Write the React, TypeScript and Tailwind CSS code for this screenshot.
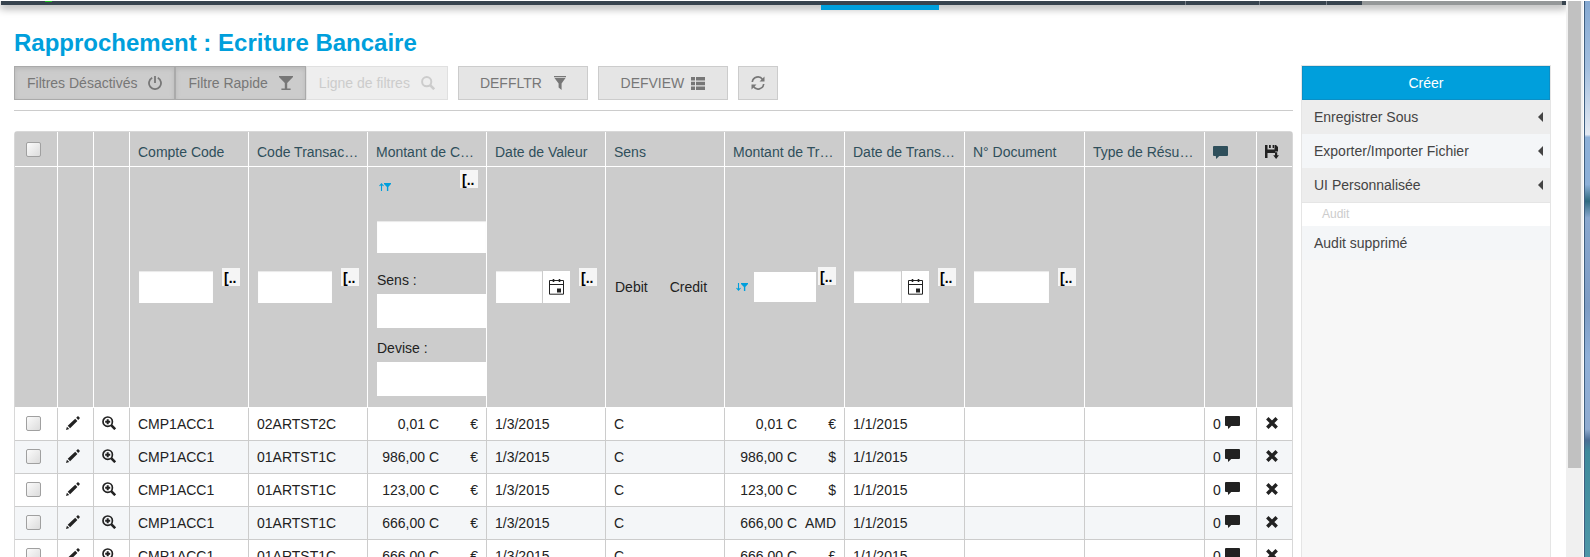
import type { ReactNode } from "react";

const rows = [
  { code: "02ARTST2C", amount: "0,01 C", transCurrency: "€" },
  { code: "01ARTST1C", amount: "986,00 C", transCurrency: "$" },
  { code: "01ARTST1C", amount: "123,00 C", transCurrency: "$" },
  { code: "01ARTST1C", amount: "666,00 C", transCurrency: "AMD" },
  { code: "01ARTST1C", amount: "666,00 C", transCurrency: "£" },
];

const headCell =
  "h-[35px] border-r border-b border-white bg-[#ccc] px-2 pt-[6px] text-left align-middle font-normal text-[#2f4f5b]";
const filterCell = "h-[241px] overflow-hidden border-r border-b border-white bg-[#ccc] pl-[9px] align-middle";
const bodyCell = "h-[33px] border-r border-b border-[#ccc] px-2 align-middle";
const iconCell = "h-[33px] border-r border-b border-[#ccc] px-2 pb-[2px] align-middle";
const inputBox = "block bg-white px-1 shadow-[inset_0_1px_1px_#e8e8e8] outline-none";
const checkBox =
  "block size-[15px] appearance-none rounded-[2px] border border-[#a0a0a0] bg-linear-to-br from-[#fbfbfb] to-[#dcdcdc]";

function PowerIcon() {
  return (
    <svg className="size-[14px] shrink-0" viewBox="0 0 14 14" fill="none" stroke="currentColor" strokeWidth="1.8">
      <path d="M4.2 1.8a6 6 0 1 0 5.6 0" />
      <path d="M7 0v7" />
    </svg>
  );
}

function GlassIcon() {
  return (
    <svg className="size-[14px] shrink-0" viewBox="0 0 14 14" fill="currentColor">
      <path d="M0 0h14v1L8.200 7v5.400h3.400V14H2.400v-1.600h3.400V7L0 1z" />
    </svg>
  );
}

function SearchIcon() {
  return (
    <svg className="size-[14px] shrink-0" viewBox="0 0 14 14" fill="none" stroke="currentColor">
      <circle cx="5.700" cy="5.700" r="4.600" strokeWidth="2" />
      <path d="M9 9l4.200 4.200" strokeWidth="2.600" />
    </svg>
  );
}

function FunnelIcon() {
  return (
    <svg className="h-[14px] w-3 shrink-0" viewBox="0 0 12 14" fill="currentColor">
      <path d="M0 0h12v1.200H0zM.5 2h11L7.600 7.500V14L4.600 11.500v-4z" />
    </svg>
  );
}

function ListIcon() {
  return (
    <svg className="h-[13px] w-[14px] shrink-0" viewBox="0 0 14 13" fill="currentColor">
      <path d="M0 0h4v3.600H0zM5 0h9v3.600H5zM0 4.700h4v3.600H0zM5 4.700h9v3.600H5zM0 9.400h4V13H0zM5 9.400h9V13H5z" />
    </svg>
  );
}

function RefreshIcon() {
  return (
    <svg className="size-[14px]" viewBox="0 0 14 14" fill="none" stroke="currentColor" strokeWidth="1.700">
      <path d="M1.300 6A5.700 5.700 0 0 1 11.600 3.400M12.700 8A5.700 5.700 0 0 1 2.400 10.600" />
      <path d="M13.500.5v5H8.500zM.5 13.500v-5h5z" fill="currentColor" stroke="none" />
    </svg>
  );
}

function CommentIcon() {
  return (
    <svg className="h-[13px] w-[15px] shrink-0" viewBox="0 0 15 13" fill="currentColor">
      <path d="M1 0h13q1 0 1 1v8q0 1-1 1H6.200L3.200 13l-.4-3H1Q0 10 0 9V1Q0 0 1 0z" />
    </svg>
  );
}

function SaveIcon() {
  return (
    <svg className="block size-[14px]" viewBox="0 0 14 14" fill="currentColor">
      <path d="M0 0h2.500v4.500h7V0H11l2 2v4.500h-2.800V8H2.500v5H0zM4 0h1.800v3H4zM7.600 0H9v3H7.600z" />
      <path d="M10 7.300h2.200v3H14L11.100 14l-2.900-3.700H10z" />
    </svg>
  );
}

function PencilIcon() {
  return (
    <svg className="block size-[14px]" viewBox="0 0 14 14" fill="currentColor">
      <path d="M0 14l.9-3.300L3.300 13.100zM1.700 9.800L9.200 2.700l2.200 2.200-7.300 7.300zM10.200 1.800L12 0l2 2-1.800 1.900z" />
    </svg>
  );
}

function ZoomIcon() {
  return (
    <svg className="block size-[14px]" viewBox="0 0 14 14" fill="none" stroke="currentColor">
      <circle cx="5.700" cy="5.700" r="4.700" strokeWidth="1.700" />
      <path d="M9.200 9.200l4 4" strokeWidth="2.600" />
      <path d="M5.700 3.200v5M3.200 5.700h5" strokeWidth="2" />
    </svg>
  );
}

function CrossIcon() {
  return (
    <svg className="block size-3" viewBox="0 0 12 12" stroke="currentColor" strokeWidth="3.400">
      <path d="M1.300 1.300l9.400 9.400M10.700 1.300l-9.400 9.400" />
    </svg>
  );
}

function CalendarIcon() {
  return (
    <svg className="h-4 w-[15px]" viewBox="0 0 15 16" fill="none" stroke="#222">
      <path d="M.5 1.500h14v13.700H.5zM.5 5.500h14" strokeWidth="1" />
      <path d="M4.500 0v3M10.500 0v3" strokeWidth="1.600" />
      <path d="M8 9.500h4v4H8z" fill="#222" stroke="none" />
    </svg>
  );
}

function SortIcon({ up }: { up?: boolean }) {
  return (
    <svg className="h-2 w-3 shrink-0" viewBox="0 0 12 8">
      <path
        d={up ? "M2.500 8V1M.5 3L2.500.8 4.500 3" : "M2.500 0v7M.5 5L2.500 7.200 4.500 5"}
        fill="none"
        stroke="#009fdc"
        strokeWidth="1.100"
      />
      <path d="M5 0h7v1L9.300 4v4H7.900V4L5 1z" fill="#009fdc" />
    </svg>
  );
}

function More() {
  return (
    <button
      type="button"
      className="block size-[18px] shrink-0 self-start overflow-hidden bg-[#f5f5f5] pl-[2px] text-left text-sm leading-5 font-bold text-black"
    >
      [..
    </button>
  );
}

function TextFilter({ label }: { label: string }) {
  return (
    <div className="flex h-[38px] items-center gap-[9px] pr-2">
      <input aria-label={label} className={`${inputBox} h-8 w-0 flex-1`} />
      <More />
    </div>
  );
}

function DateFilter({ label }: { label: string }) {
  return (
    <div className="flex h-[38px] items-center gap-[9px] pr-2">
      <div className="flex flex-1 gap-px">
        <input aria-label={label} className={`${inputBox} h-8 w-0 flex-1`} />
        <button type="button" aria-label="Calendrier" className="flex h-8 w-[27px] items-center justify-center bg-white">
          <CalendarIcon />
        </button>
      </div>
      <More />
    </div>
  );
}

function Amount({ value, currency }: { value: string; currency: string }) {
  return (
    <div className="flex justify-end">
      <span>{value}</span>
      <span className="w-[39px] text-right">{currency}</span>
    </div>
  );
}

function MenuItem({ children, tone, arrow }: { children: ReactNode; tone: string; arrow?: boolean }) {
  return (
    <a href="#" className={`flex h-[34px] items-center justify-between pr-[7px] pl-3 text-[#444] ${tone}`}>
      {children}
      {arrow && (
        <svg className="h-[10px] w-[5px]" viewBox="0 0 5 10" fill="#444">
          <path d="M5 0v10L0 5z" />
        </svg>
      )}
    </a>
  );
}

export default function App() {
  const pressed =
    "flex h-[34px] items-center gap-[11px] border border-[#aaa] bg-[#ccc] px-3 shadow-[inset_0_2px_4px_#b8b8b8]";
  const plain = "flex h-[34px] items-center justify-center border border-[#ccc] bg-[#e5e5e5]";
  return (
    <div className="flex h-screen overflow-hidden bg-white pt-px font-['Liberation_Sans',Arial,sans-serif] text-sm leading-5 text-[#222]">
      <div className="min-w-0 flex-1 overflow-hidden pl-px">
        <header className="relative flex h-1 justify-end bg-[#38444f] pr-1 shadow-[0_2px_9px_1px_rgba(0,0,0,0.4)]">
          <div className="absolute top-0 left-[44px] h-px w-[7px] bg-[#1fc41f]" />
          <div className="absolute top-full left-[820px] h-[5px] w-[118px] bg-[#009fdc]" />
          <div className="w-[74px] border-l border-[#777f87]" />
          <div className="w-[67px] border-l border-[#777f87]" />
          <div className="w-[36px] border-l border-[#777f87]" />
          <div className="w-[200px] bg-[#959899]" />
        </header>

        <main className="pr-[15px] pl-[13px]">
          <h1 className="pt-[22px] text-2xl leading-8 font-bold text-[#009fdc]">Rapprochement : Ecriture Bancaire</h1>
          <div className="flex items-start gap-2 pt-[6px]">
            <section className="min-w-0 flex-1">
              <div className="flex gap-[10px] border-b border-[#ccc] pt-px pb-[10px] text-[#777]">
                <div className="flex">
                  <button type="button" className={pressed}>
                    Filtres Désactivés <PowerIcon />
                  </button>
                  <button type="button" className={pressed}>
                    Filtre Rapide <GlassIcon />
                  </button>
                  <button
                    type="button"
                    disabled
                    className="flex h-[34px] items-center gap-[11px] border border-[#e0e0e0] bg-[#eee] px-3 text-[#ccc]"
                  >
                    Ligne de filtres <SearchIcon />
                  </button>
                </div>
                <button type="button" className={`${plain} w-[130px] gap-3`}>
                  DEFFLTR <FunnelIcon />
                </button>
                <button type="button" className={`${plain} w-[130px] gap-[7px]`}>
                  DEFVIEW <ListIcon />
                </button>
                <button type="button" aria-label="Actualiser" className={`${plain} w-10`}>
                  <RefreshIcon />
                </button>
              </div>

              <table className="mt-5 w-full table-fixed border-separate border-spacing-0 rounded-t-[3px] border border-[#d8d8d8]">
                <colgroup>
                  <col className="w-[43px]" />
                  <col className="w-9" />
                  <col className="w-9" />
                  <col span={5} className="w-[119px]" />
                  <col span={4} />
                  <col className="w-[52px]" />
                  <col className="w-[35px]" />
                </colgroup>
                <thead>
                  <tr>
                    <th className="h-[35px] border-r border-b border-white bg-[#ccc] pl-[11px] align-middle">
                      <input type="checkbox" aria-label="Tout sélectionner" className={checkBox} />
                    </th>
                    <th className={headCell} />
                    <th className={headCell} />
                    <th className={headCell}>Compte Code</th>
                    <th className={headCell}>Code Transac…</th>
                    <th className={headCell}>Montant de C…</th>
                    <th className={headCell}>Date de Valeur</th>
                    <th className={headCell}>Sens</th>
                    <th className={headCell}>Montant de Tr…</th>
                    <th className={headCell}>Date de Trans…</th>
                    <th className={headCell}>N° Document</th>
                    <th className={headCell}>Type de Résu…</th>
                    <th className={headCell}>
                      <CommentIcon />
                    </th>
                    <th className="h-[35px] border-b border-white bg-[#ccc] px-2 pt-[6px] align-middle text-[#222]">
                      <SaveIcon />
                    </th>
                  </tr>
                  <tr>
                    <td className={filterCell} />
                    <td className={filterCell} />
                    <td className={filterCell} />
                    <td className={filterCell}>
                      <TextFilter label="Compte Code" />
                    </td>
                    <td className={filterCell}>
                      <TextFilter label="Code Transaction" />
                    </td>
                    <td className={filterCell}>
                      <div className="flex flex-col pb-[11px]">
                        <div className="flex h-[54px] justify-between pt-[3px] pr-2 pl-[2px]">
                          <div className="pt-[13px]">
                            <SortIcon up />
                          </div>
                          <More />
                        </div>
                        <input aria-label="Montant" className={`${inputBox} h-8 w-full`} />
                        <label htmlFor="f-sens" className="pt-[17px] pb-1">
                          Sens :
                        </label>
                        <input id="f-sens" className="block h-[34px] w-full bg-white px-1 outline-none" />
                        <label htmlFor="f-devise" className="pt-[10px] pb-1">
                          Devise :
                        </label>
                        <input id="f-devise" className="block h-[34px] w-full bg-white px-1 outline-none" />
                      </div>
                    </td>
                    <td className={filterCell}>
                      <DateFilter label="Date de Valeur" />
                    </td>
                    <td className={filterCell}>
                      <div className="flex gap-[22px]">
                        <span>Debit</span>
                        <span>Credit</span>
                      </div>
                    </td>
                    <td className={filterCell}>
                      <div className="flex h-10 items-center gap-[2px] pr-2 pl-[2px]">
                        <SortIcon />
                        <input
                          aria-label="Montant de Transaction"
                          className="ml-1 block h-[30px] w-0 flex-1 bg-white px-1 outline-none"
                        />
                        <More />
                      </div>
                    </td>
                    <td className={filterCell}>
                      <DateFilter label="Date de Transaction" />
                    </td>
                    <td className={filterCell}>
                      <TextFilter label="N° Document" />
                    </td>
                    <td className={filterCell} />
                    <td className={filterCell} />
                    <td className="h-[241px] border-b border-white bg-[#ccc]" />
                  </tr>
                </thead>
                <tbody>
                  {rows.map((row, i) => (
                    <tr key={i} className="even:bg-[#f4f6f8]">
                      <td className="h-[33px] border-r border-b border-[#ccc] pb-[2px] pl-[11px] align-middle">
                        <input type="checkbox" aria-label={`Ligne ${i + 1}`} className={checkBox} />
                      </td>
                      <td className={iconCell}>
                        <button type="button" aria-label="Modifier" className="block">
                          <PencilIcon />
                        </button>
                      </td>
                      <td className={iconCell}>
                        <button type="button" aria-label="Détails" className="block">
                          <ZoomIcon />
                        </button>
                      </td>
                      <td className={bodyCell}>CMP1ACC1</td>
                      <td className={bodyCell}>{row.code}</td>
                      <td className={bodyCell}>
                        <Amount value={row.amount} currency="€" />
                      </td>
                      <td className={bodyCell}>1/3/2015</td>
                      <td className={bodyCell}>C</td>
                      <td className={bodyCell}>
                        <Amount value={row.amount} currency={row.transCurrency} />
                      </td>
                      <td className={bodyCell}>1/1/2015</td>
                      <td className={bodyCell} />
                      <td className={bodyCell} />
                      <td className={bodyCell}>
                        <div className="flex items-start gap-1">
                          0
                          <span className="pt-[2px]">
                            <CommentIcon />
                          </span>
                        </div>
                      </td>
                      <td className="h-[33px] border-b border-[#ccc] px-[9px] pb-[2px] align-middle">
                        <button type="button" aria-label="Supprimer" className="block">
                          <CrossIcon />
                        </button>
                      </td>
                    </tr>
                  ))}
                </tbody>
              </table>
            </section>

            <aside className="h-screen w-[250px] shrink-0 border border-[#e5e5e5] bg-[#f7f7f7]">
              <button type="button" className="block h-[34px] w-full border border-[#0a8fc6] bg-[#009fdc] text-white">
                Créer
              </button>
              <nav>
                <MenuItem tone="bg-[#ededed]" arrow>
                  Enregistrer Sous
                </MenuItem>
                <MenuItem tone="bg-[#f4f6f8]" arrow>
                  Exporter/Importer Fichier
                </MenuItem>
                <MenuItem tone="bg-[#ededed]" arrow>
                  UI Personnalisée
                </MenuItem>
                <div className="h-6 border-t border-[#e5e5e5] bg-white pl-5 text-xs leading-[22px] text-[#ccc]">Audit</div>
                <MenuItem tone="bg-[#f4f6f8]">Audit supprimé</MenuItem>
              </nav>
            </aside>
          </div>
        </main>
      </div>

      <div className="w-[17px] shrink-0 bg-[#f0f0f0] px-[2px]">
        <div className="h-[84%] bg-[#c1c1c1]" />
      </div>
      <div className="w-[7px] shrink-0 border-l border-white bg-white">
        <div className="h-full border-l border-[#3f5f80] bg-[linear-gradient(#85a9d2_0%,#a3bfdf_12%,#e3e9f2_24%,#8db0d8_24.5%,#8db0d8_33%,#2f6a80_36%,#8aa8cf_39%,#7d9cc4_55%,#8fb0d8_64%,#8fabd0_77%,#4a6d94_79%,#3f8a9c_81%,#4f97a8_100%)]" />
      </div>
    </div>
  );
}
